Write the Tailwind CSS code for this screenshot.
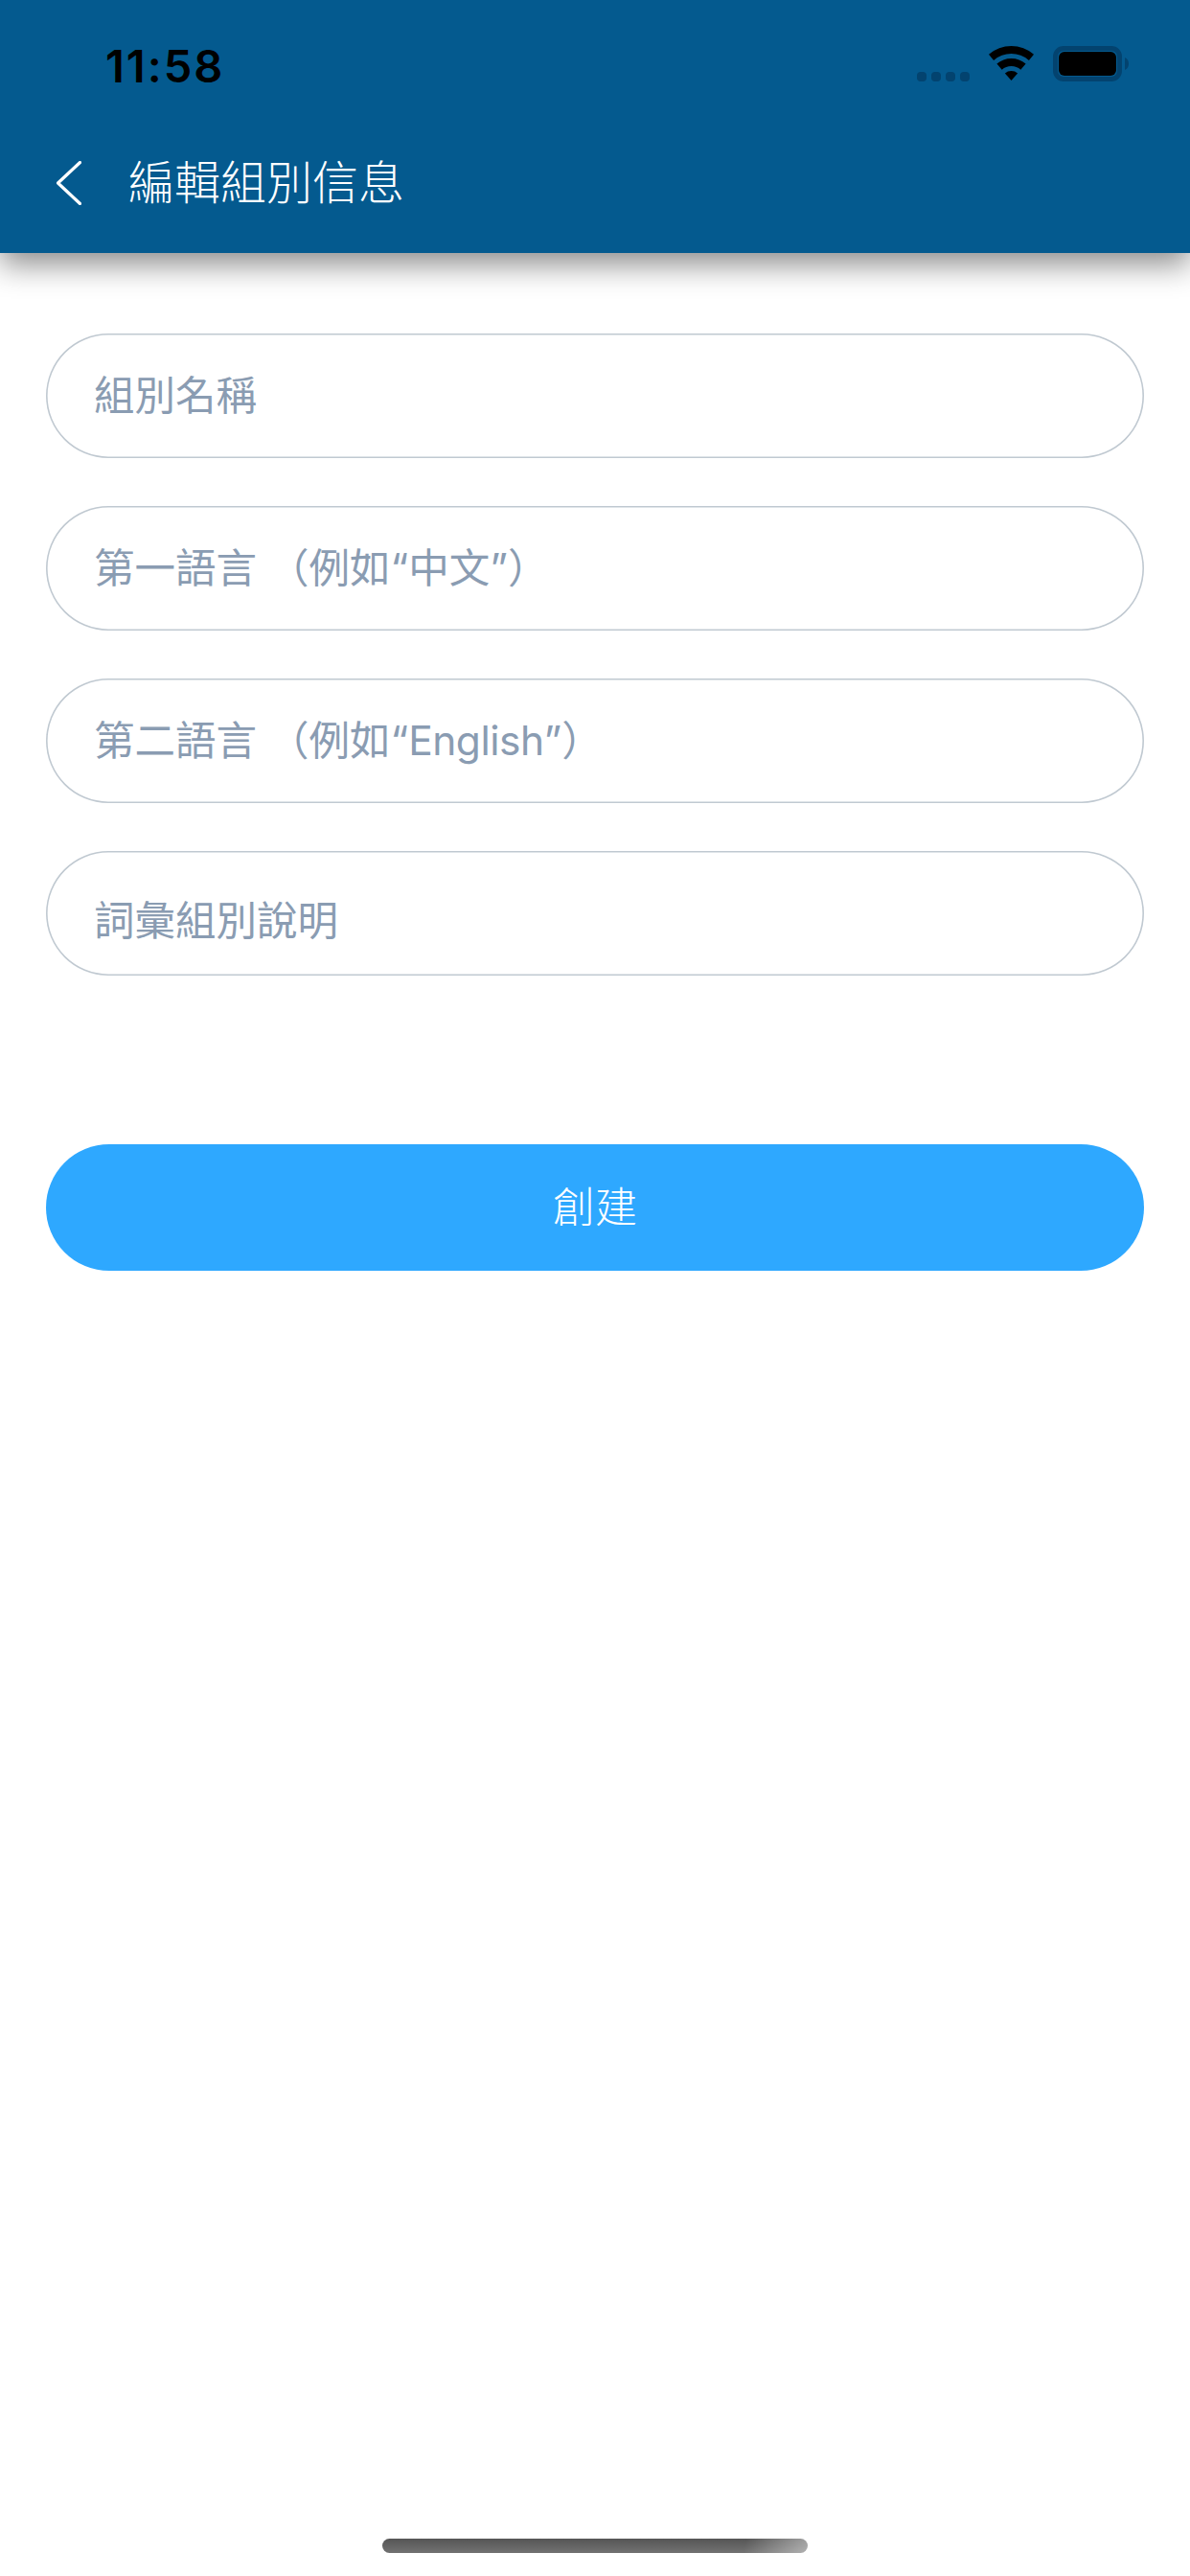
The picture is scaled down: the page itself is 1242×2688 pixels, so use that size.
<!DOCTYPE html>
<html lang="zh-Hant">
<head>
<meta charset="utf-8">
<script src="https://cdn.jsdelivr.net/npm/@tailwindcss/browser@4"></script>
<title>編輯組別信息</title>
</head>
<body class="m-0 bg-white">
<div class="w-[1242px] h-[2688px] bg-white flex flex-col overflow-hidden font-['Inter','Noto_Sans_CJK_TC',sans-serif]">
  <header class="relative z-10 h-[264px] shrink-0 bg-[#045a8f] shadow-[0_12px_30px_rgba(0,0,0,0.45)] flex flex-col">
    <div class="h-[136px] flex items-center justify-between pl-[110px] pr-[64px]">
      <span class="text-[47px] leading-none font-semibold text-black tracking-[2px]">11:58</span>
      <div class="flex items-start h-[38px] mt-[-2px]">
        <div class="flex gap-[5px] mt-[27px]">
          <span class="w-[10px] h-[10px] rounded-[4px] bg-[#03436f]"></span>
          <span class="w-[10px] h-[10px] rounded-[4px] bg-[#03436f]"></span>
          <span class="w-[10px] h-[10px] rounded-[4px] bg-[#03436f]"></span>
          <span class="w-[10px] h-[10px] rounded-[4px] bg-[#03436f]"></span>
        </div>
        <svg class="ml-[20px]" width="47" height="36" viewBox="0 0 47 36" fill="#000">
          <path d="M0 8.8A36 36 0 0 1 47 8.8L41.9 14.9A28 28 0 0 0 5.1 14.9Z"/>
          <path d="M8.4 18.6A23 23 0 0 1 38.6 18.6L33.3 24.7A15 15 0 0 0 13.7 24.7Z"/>
          <path d="M16.9 28.5A10 10 0 0 1 30.1 28.5L23.5 36Z"/>
        </svg>
        <div class="ml-[20px] flex items-center">
          <div class="w-[72px] h-[37px] rounded-[11px] border-[5px] border-[#03436f] p-[1px]">
            <div class="w-full h-full rounded-[6px] bg-black"></div>
          </div>
          <svg class="ml-[3px]" width="4" height="13" viewBox="0 0 4 13" fill="#03436f"><path d="M0 0C2.5 .8 4 3.4 4 6.5S2.5 12.2 0 13Z"/></svg>
        </div>
      </div>
    </div>
    <div class="h-[110px] flex items-center pl-[59px]">
      <svg width="26" height="46" viewBox="0 0 26 46" fill="none" stroke="#fff" stroke-width="3.2" stroke-linecap="round" stroke-linejoin="round"><path d="M24.5 1.5L1.5 23L24.5 44.5"/></svg>
      <h1 class="ml-[49px] text-[48px] leading-none font-light text-white">編輯組別信息</h1>
    </div>
  </header>

  <main class="flex flex-col px-[48px] pt-[84px]">
    <div class="flex flex-col gap-[50px]">
      <div class="h-[130px] rounded-[65px] shadow-[inset_0_0_0_1.6px_#c0c9d1] pl-[50px] flex items-center text-[42.5px] text-[#8a9cb2]">組別名稱</div>
      <div class="h-[130px] rounded-[65px] shadow-[inset_0_0_0_1.6px_#c0c9d1] pl-[50px] flex items-center text-[42.5px] text-[#8a9cb2]">第一語言 （例如“中文”）</div>
      <div class="h-[130px] rounded-[65px] shadow-[inset_0_0_0_1.6px_#c0c9d1] pl-[50px] flex items-center text-[42.5px] text-[#8a9cb2]"><span>第二語言 （例如“<span class="tracking-[-0.5px]">English</span>”）</span></div>
      <div class="h-[130px] rounded-[65px] shadow-[inset_0_0_0_1.6px_#c0c9d1] pl-[50px] pt-[16px] flex items-center text-[42.5px] text-[#8a9cb2]">詞彙組別說明</div>
    </div>
    <button class="mt-[176px] h-[132px] w-[1146px] rounded-[66px] bg-[#2ea8ff] text-white text-[44px] font-light flex items-center justify-center">創建</button>
  </main>

  <div class="mt-auto mb-[24px] mx-auto w-[444px] h-[15px] rounded-full bg-[linear-gradient(100deg,transparent_85%,rgba(255,255,255,0.45)_100%),linear-gradient(180deg,#555,#727272)]"></div>
</div>
</body>
</html>
